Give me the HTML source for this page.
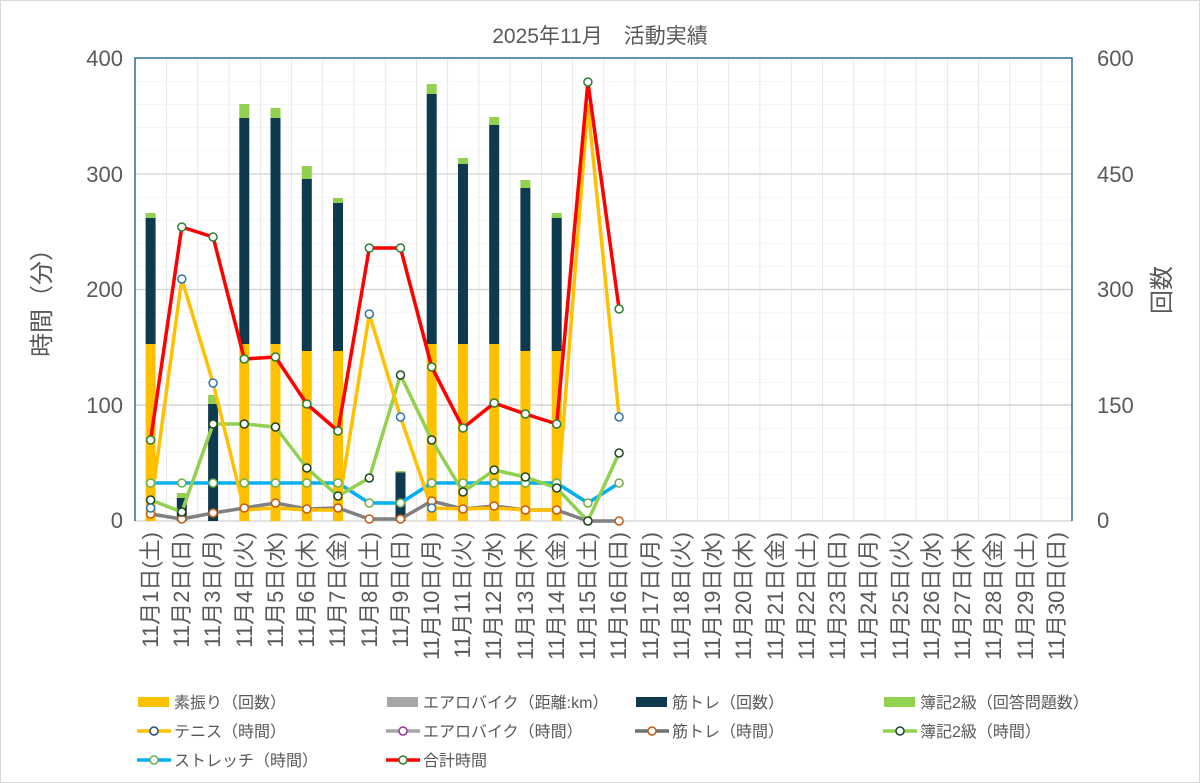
<!DOCTYPE html>
<html><head><meta charset="utf-8"><style>
html,body{margin:0;padding:0;background:#fff;}
svg{display:block;font-family:"Liberation Sans","Noto Sans CJK JP",sans-serif;}
.t{fill:#595959;}
</style></head><body>
<svg width="1200" height="783" viewBox="0 0 1200 783" xmlns="http://www.w3.org/2000/svg">
<defs>
<pattern id="vg" x="135" y="0" width="31.233" height="783" patternUnits="userSpaceOnUse"><line x1="0" y1="0" x2="0" y2="783" stroke="#d9d9d9" stroke-width="1.2"/></pattern>
<pattern id="hg" x="0" y="58" width="1200" height="23.15" patternUnits="userSpaceOnUse"><line x1="0" y1="0" x2="1200" y2="0" stroke="#ededed" stroke-width="1"/></pattern>
</defs>
<rect x="0" y="0" width="1200" height="783" fill="#fff"/>
<rect x="0.5" y="0.5" width="1199" height="782" fill="none" stroke="#d9d9d9"/>
<text x="600" y="43" text-anchor="middle" font-size="21" class="t">2025年11月　活動実績</text>
<rect x="135" y="58" width="937" height="463" fill="url(#hg)"/>
<rect x="135" y="58" width="937" height="463" fill="url(#vg)"/>
<g stroke="#d0d0d0" stroke-width="1.3">
<line x1="135" y1="174" x2="1072" y2="174"/><line x1="135" y1="289.5" x2="1072" y2="289.5"/><line x1="135" y1="405" x2="1072" y2="405"/><line x1="135" y1="521" x2="1072" y2="521"/>
</g>
<path d="M135 521V58H1072V521" fill="none" stroke="#2e6e96" stroke-width="1.5"/>
<g font-size="22" class="t" text-anchor="end">
<text x="123" y="66">400</text><text x="123" y="182">300</text><text x="123" y="297">200</text><text x="123" y="413">100</text><text x="123" y="528">0</text>
</g>
<g font-size="22" class="t" text-anchor="start">
<text x="1097" y="66">600</text><text x="1097" y="182">450</text><text x="1097" y="297">300</text><text x="1097" y="413">150</text><text x="1097" y="528">0</text>
</g>
<text transform="translate(50,297) rotate(-90)" font-size="24" class="t" text-anchor="middle">時間（分）</text>
<text transform="translate(1170,290) rotate(-90)" font-size="24" class="t" text-anchor="middle">回数</text>
<g>
<rect x="145.6" y="344" width="10" height="177" fill="#ffc000"/><rect x="145.6" y="218" width="10" height="126" fill="#0e3a50"/><rect x="145.6" y="213" width="10" height="5" fill="#92d050"/>
<rect x="176.8" y="498" width="10" height="23" fill="#0e3a50"/><rect x="176.8" y="493" width="10" height="5" fill="#92d050"/>
<rect x="208.1" y="404" width="10" height="117" fill="#0e3a50"/><rect x="208.1" y="395" width="10" height="9" fill="#92d050"/>
<rect x="239.3" y="344" width="10" height="177" fill="#ffc000"/><rect x="239.3" y="118" width="10" height="226" fill="#0e3a50"/><rect x="239.3" y="104" width="10" height="14" fill="#92d050"/>
<rect x="270.5" y="344" width="10" height="177" fill="#ffc000"/><rect x="270.5" y="118" width="10" height="226" fill="#0e3a50"/><rect x="270.5" y="108" width="10" height="10" fill="#92d050"/>
<rect x="301.8" y="351" width="10" height="170" fill="#ffc000"/><rect x="301.8" y="179" width="10" height="172" fill="#0e3a50"/><rect x="301.8" y="166" width="10" height="13" fill="#92d050"/>
<rect x="333" y="351" width="10" height="170" fill="#ffc000"/><rect x="333" y="203" width="10" height="148" fill="#0e3a50"/><rect x="333" y="198" width="10" height="5" fill="#92d050"/>
<rect x="395.5" y="472" width="10" height="49" fill="#0e3a50"/><rect x="395.5" y="471" width="10" height="1.5" fill="#92d050"/>
<rect x="426.7" y="344" width="10" height="177" fill="#ffc000"/><rect x="426.7" y="94" width="10" height="250" fill="#0e3a50"/><rect x="426.7" y="84" width="10" height="10" fill="#92d050"/>
<rect x="458" y="344" width="10" height="177" fill="#ffc000"/><rect x="458" y="164" width="10" height="180" fill="#0e3a50"/><rect x="458" y="158" width="10" height="6" fill="#92d050"/>
<rect x="489.2" y="344" width="10" height="177" fill="#ffc000"/><rect x="489.2" y="125" width="10" height="219" fill="#0e3a50"/><rect x="489.2" y="117" width="10" height="8" fill="#92d050"/>
<rect x="520.4" y="351" width="10" height="170" fill="#ffc000"/><rect x="520.4" y="188" width="10" height="163" fill="#0e3a50"/><rect x="520.4" y="180" width="10" height="8" fill="#92d050"/>
<rect x="551.7" y="351" width="10" height="170" fill="#ffc000"/><rect x="551.7" y="218" width="10" height="133" fill="#0e3a50"/><rect x="551.7" y="213" width="10" height="5" fill="#92d050"/>
</g>
<g fill="none" stroke-width="3.5" stroke-linejoin="round">
<polyline stroke="#808080" points="150.6,514 181.8,519 213.1,513 244.3,508 275.5,503 306.8,509 338,508 369.3,519 400.5,519 431.7,501 463,509 494.2,506 525.4,510 556.7,510 587.9,521 619.1,521"/>
<polyline stroke="#00b0f0" points="150.6,483 181.8,483 213.1,483 244.3,483 275.5,483 306.8,483 338,483 369.3,503 400.5,503 431.7,483 463,483 494.2,483 525.4,483 556.7,483 587.9,503 619.1,483"/>
<polyline stroke="#92d050" points="150.6,500 181.8,512 213.1,424 244.3,424 275.5,427 306.8,468 338,496 369.3,478 400.5,375 431.7,440 463,492 494.2,470 525.4,477 556.7,488 587.9,521 619.1,453"/>
<polyline stroke="#ffc000" points="150.6,508 181.8,279 213.1,383 244.3,510 275.5,508 306.8,510 338,510 369.3,314 400.5,417 431.7,508 463,509 494.2,508 525.4,510 556.7,510 587.9,105 619.1,417"/>
<polyline stroke="#ff0000" points="150.6,440 181.8,227 213.1,237 244.3,359 275.5,357 306.8,404 338,431 369.3,248 400.5,248 431.7,367 463,428 494.2,403 525.4,414 556.7,424 587.9,82 619.1,309"/>
</g>
<g fill="#fff" stroke-width="1.5">
<g stroke="#c55a11"><circle cx="150.6" cy="514" r="4"/><circle cx="181.8" cy="519" r="4"/><circle cx="213.1" cy="513" r="4"/><circle cx="244.3" cy="508" r="4"/><circle cx="275.5" cy="503" r="4"/><circle cx="306.8" cy="509" r="4"/><circle cx="338" cy="508" r="4"/><circle cx="369.3" cy="519" r="4"/><circle cx="400.5" cy="519" r="4"/><circle cx="431.7" cy="501" r="4"/><circle cx="463" cy="509" r="4"/><circle cx="494.2" cy="506" r="4"/><circle cx="525.4" cy="510" r="4"/><circle cx="556.7" cy="510" r="4"/><circle cx="587.9" cy="521" r="4"/><circle cx="619.1" cy="521" r="4"/></g>
<g stroke="#70ad47"><circle cx="150.6" cy="483" r="4"/><circle cx="181.8" cy="483" r="4"/><circle cx="213.1" cy="483" r="4"/><circle cx="244.3" cy="483" r="4"/><circle cx="275.5" cy="483" r="4"/><circle cx="306.8" cy="483" r="4"/><circle cx="338" cy="483" r="4"/><circle cx="369.3" cy="503" r="4"/><circle cx="400.5" cy="503" r="4"/><circle cx="431.7" cy="483" r="4"/><circle cx="463" cy="483" r="4"/><circle cx="494.2" cy="483" r="4"/><circle cx="525.4" cy="483" r="4"/><circle cx="556.7" cy="483" r="4"/><circle cx="587.9" cy="503" r="4"/><circle cx="619.1" cy="483" r="4"/></g>
<g stroke="#1e4620"><circle cx="150.6" cy="500" r="4"/><circle cx="181.8" cy="512" r="4"/><circle cx="213.1" cy="424" r="4"/><circle cx="244.3" cy="424" r="4"/><circle cx="275.5" cy="427" r="4"/><circle cx="306.8" cy="468" r="4"/><circle cx="338" cy="496" r="4"/><circle cx="369.3" cy="478" r="4"/><circle cx="400.5" cy="375" r="4"/><circle cx="431.7" cy="440" r="4"/><circle cx="463" cy="492" r="4"/><circle cx="494.2" cy="470" r="4"/><circle cx="525.4" cy="477" r="4"/><circle cx="556.7" cy="488" r="4"/><circle cx="587.9" cy="521" r="4"/><circle cx="619.1" cy="453" r="4"/></g>
<g stroke="#2e75b6"><circle cx="150.6" cy="508" r="4"/><circle cx="181.8" cy="279" r="4"/><circle cx="213.1" cy="383" r="4"/><circle cx="369.3" cy="314" r="4"/><circle cx="400.5" cy="417" r="4"/><circle cx="431.7" cy="508" r="4"/><circle cx="619.1" cy="417" r="4"/></g>
<g stroke="#2e7d32"><circle cx="150.6" cy="440" r="4"/><circle cx="181.8" cy="227" r="4"/><circle cx="213.1" cy="237" r="4"/><circle cx="244.3" cy="359" r="4"/><circle cx="275.5" cy="357" r="4"/><circle cx="306.8" cy="404" r="4"/><circle cx="338" cy="431" r="4"/><circle cx="369.3" cy="248" r="4"/><circle cx="400.5" cy="248" r="4"/><circle cx="431.7" cy="367" r="4"/><circle cx="463" cy="428" r="4"/><circle cx="494.2" cy="403" r="4"/><circle cx="525.4" cy="414" r="4"/><circle cx="556.7" cy="424" r="4"/><circle cx="587.9" cy="82" r="4"/><circle cx="619.1" cy="309" r="4"/></g>
</g>
<g font-size="22" class="t" text-anchor="end">
<text transform="translate(158,532) rotate(-90)">11月1日(土)</text>
<text transform="translate(189,532) rotate(-90)">11月2日(日)</text>
<text transform="translate(220,532) rotate(-90)">11月3日(月)</text>
<text transform="translate(252,532) rotate(-90)">11月4日(火)</text>
<text transform="translate(283,532) rotate(-90)">11月5日(水)</text>
<text transform="translate(314,532) rotate(-90)">11月6日(木)</text>
<text transform="translate(345,532) rotate(-90)">11月7日(金)</text>
<text transform="translate(377,532) rotate(-90)">11月8日(土)</text>
<text transform="translate(408,532) rotate(-90)">11月9日(日)</text>
<text transform="translate(439,532) rotate(-90)">11月10日(月)</text>
<text transform="translate(470,532) rotate(-90)">11月11日(火)</text>
<text transform="translate(501,532) rotate(-90)">11月12日(水)</text>
<text transform="translate(533,532) rotate(-90)">11月13日(木)</text>
<text transform="translate(564,532) rotate(-90)">11月14日(金)</text>
<text transform="translate(595,532) rotate(-90)">11月15日(土)</text>
<text transform="translate(626,532) rotate(-90)">11月16日(日)</text>
<text transform="translate(658,532) rotate(-90)">11月17日(月)</text>
<text transform="translate(689,532) rotate(-90)">11月18日(火)</text>
<text transform="translate(720,532) rotate(-90)">11月19日(水)</text>
<text transform="translate(751,532) rotate(-90)">11月20日(木)</text>
<text transform="translate(783,532) rotate(-90)">11月21日(金)</text>
<text transform="translate(814,532) rotate(-90)">11月22日(土)</text>
<text transform="translate(845,532) rotate(-90)">11月23日(日)</text>
<text transform="translate(876,532) rotate(-90)">11月24日(月)</text>
<text transform="translate(908,532) rotate(-90)">11月25日(火)</text>
<text transform="translate(939,532) rotate(-90)">11月26日(水)</text>
<text transform="translate(970,532) rotate(-90)">11月27日(木)</text>
<text transform="translate(1001,532) rotate(-90)">11月28日(金)</text>
<text transform="translate(1033,532) rotate(-90)">11月29日(土)</text>
<text transform="translate(1064,532) rotate(-90)">11月30日(日)</text>
</g>
<g font-size="16" class="t">
<rect x="138" y="697" width="31" height="10" fill="#ffc000"/><text x="174" y="708">素振り（回数）</text>
<rect x="387" y="697" width="31" height="10" fill="#a6a6a6"/><text x="423" y="708">エアロバイク（距離:km）</text>
<rect x="636" y="697" width="31" height="10" fill="#0e3a50"/><text x="672" y="708">筋トレ（回数）</text>
<rect x="884" y="697" width="31" height="10" fill="#92d050"/><text x="920" y="708">簿記2級（回答問題数）</text>
<line x1="137" y1="731" x2="171" y2="731" stroke="#ffc000" stroke-width="3.5"/><circle cx="154" cy="731" r="4" fill="#fff" stroke="#1f4e79" stroke-width="1.5"/><text x="174" y="737">テニス（時間）</text>
<line x1="386" y1="731" x2="420" y2="731" stroke="#a6a6a6" stroke-width="3.5"/><circle cx="403" cy="731" r="4" fill="#fff" stroke="#a030a0" stroke-width="1.5"/><text x="423" y="737">エアロバイク（時間）</text>
<line x1="635" y1="731" x2="669" y2="731" stroke="#707070" stroke-width="3.5"/><circle cx="652" cy="731" r="4" fill="#fff" stroke="#c55a11" stroke-width="1.5"/><text x="672" y="737">筋トレ（時間）</text>
<line x1="883" y1="731" x2="917" y2="731" stroke="#92d050" stroke-width="3.5"/><circle cx="900" cy="731" r="4" fill="#fff" stroke="#1e4620" stroke-width="1.5"/><text x="920" y="737">簿記2級（時間）</text>
<line x1="137" y1="760" x2="171" y2="760" stroke="#00b0f0" stroke-width="3.5"/><circle cx="154" cy="760" r="4" fill="#fff" stroke="#70ad47" stroke-width="1.5"/><text x="174" y="766">ストレッチ（時間）</text>
<line x1="386" y1="760" x2="420" y2="760" stroke="#ff0000" stroke-width="3.5"/><circle cx="403" cy="760" r="4" fill="#fff" stroke="#2e7d32" stroke-width="1.5"/><text x="423" y="766">合計時間</text>
</g>
</svg>
</body></html>
